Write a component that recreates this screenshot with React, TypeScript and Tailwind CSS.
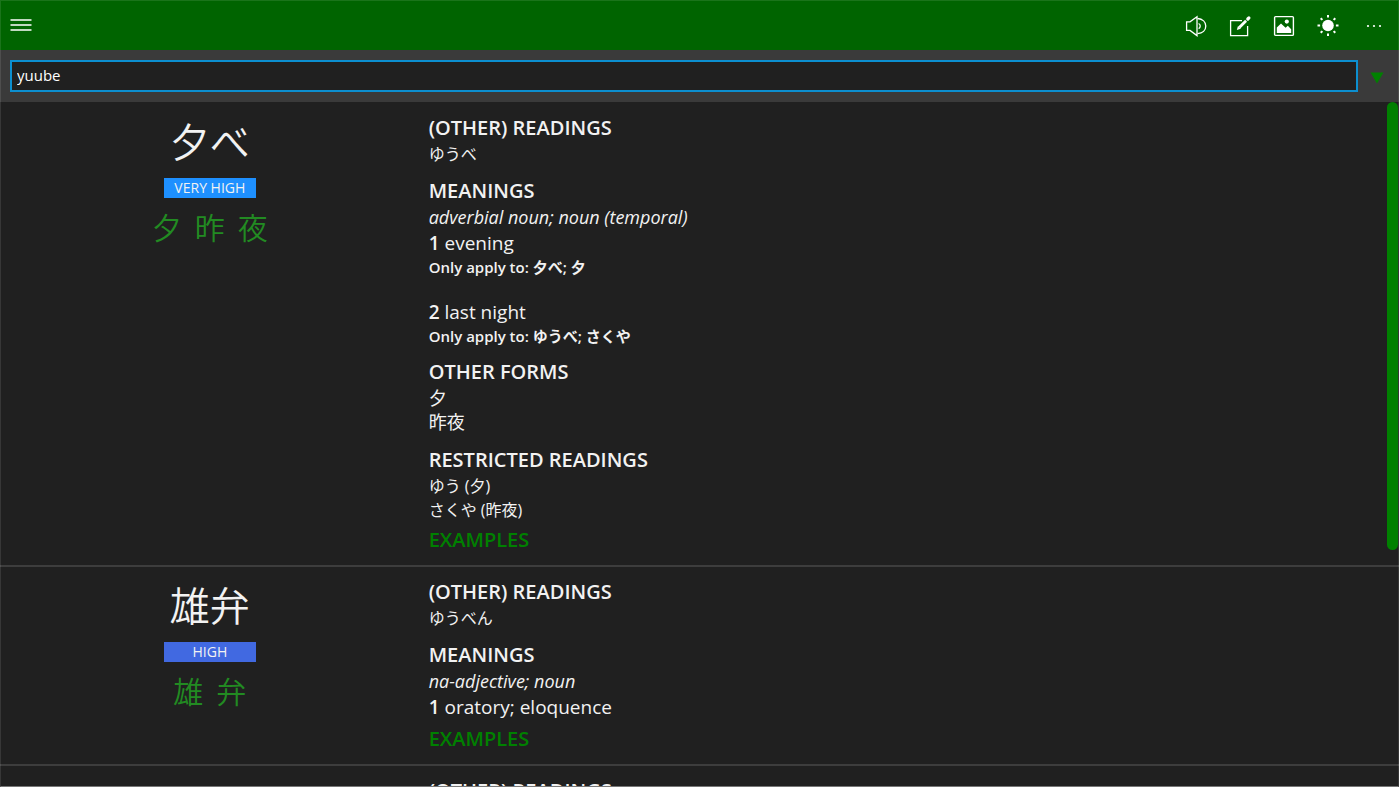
import { useState } from "react";

interface Sense {
  gloss: string;
  appliesTo?: string;
}

interface Entry {
  word: string;
  frequency: string;
  badge: string;
  kanji: string[];
  readings: string[];
  partOfSpeech: string;
  senses: Sense[];
  forms?: string[];
  restricted?: string[];
}

const entries: Entry[] = [
  {
    word: "夕べ",
    frequency: "VERY HIGH",
    badge: "bg-[#1e90ff]",
    kanji: ["夕", "昨", "夜"],
    readings: ["ゆうべ"],
    partOfSpeech: "adverbial noun; noun (temporal)",
    senses: [
      { gloss: "evening", appliesTo: "夕べ; 夕" },
      { gloss: "last night", appliesTo: "ゆうべ; さくや" },
    ],
    forms: ["夕", "昨夜"],
    restricted: ["ゆう (夕)", "さくや (昨夜)"],
  },
  {
    word: "雄弁",
    frequency: "HIGH",
    badge: "bg-[#4169e1]",
    kanji: ["雄", "弁"],
    readings: ["ゆうべん"],
    partOfSpeech: "na-adjective; noun",
    senses: [{ gloss: "oratory; eloquence" }],
  },
  {
    word: "",
    frequency: "",
    badge: "",
    kanji: [],
    readings: [],
    partOfSpeech: "",
    senses: [],
  },
];

function VolumeIcon() {
  return (
    <svg width="24" height="24" viewBox="0 0 24 24" fill="none" stroke="currentColor" strokeWidth="1.3">
      <path d="M2.6 7.8h3.4L13 2.8v18.8l-7-5.2H2.6z" />
      <path d="M14.6 9.5a2.9 2.9 0 0 1 0 5.2" />
      <path d="M13.6 4.5c5 .4 8.2 3.4 8.2 7.6s-3.2 7.2-8.2 7.6" />
    </svg>
  );
}

function EditIcon() {
  return (
    <svg width="24" height="24" viewBox="0 0 24 24" fill="none" stroke="currentColor">
      <path d="M14 6.7H2.6v15h17V12" strokeWidth="1.3" />
      <path d="M11.3 13.5l6.8-6.8" strokeWidth="2.8" />
      <path d="M8.8 16l1.2-4 2.8 2.8z" fill="currentColor" stroke="none" />
      <path d="M19.8 5l1.1-1.1" strokeWidth="3.2" strokeLinecap="round" />
    </svg>
  );
}

function PictureIcon() {
  return (
    <svg width="24" height="24" viewBox="0 0 24 24" fill="none">
      <rect x="2.6" y="2.6" width="18.8" height="18.8" rx="1" stroke="currentColor" strokeWidth="1.4" />
      <circle cx="14.8" cy="7.6" r="2.1" fill="currentColor" />
      <path d="M4.8 19v-5.6L9 9.4l4.6 4.4 2.2-2 3.4 3.4V19z" fill="currentColor" />
    </svg>
  );
}

function SunIcon() {
  return (
    <svg width="24" height="24" viewBox="0 0 24 24" stroke="currentColor" strokeWidth="2">
      <circle cx="12" cy="11.5" r="5.8" fill="currentColor" stroke="none" />
      <path d="M12 1v2.6M12 19.4V22M1.5 11.5h2.6M19.9 11.5h2.6M4.7 4.2l1.7 1.7M17.6 17.1l1.7 1.7M4.7 18.8l1.7-1.7M17.6 5.9l1.7-1.7" />
    </svg>
  );
}

function Toolbar() {
  const actions = [
    { label: "Sound", icon: <VolumeIcon /> },
    { label: "Draw", icon: <EditIcon /> },
    { label: "Picture", icon: <PictureIcon /> },
    { label: "Theme", icon: <SunIcon /> },
  ];

  return (
    <header className="flex h-[50px] shrink-0 items-center bg-[#006400] px-px text-white">
      <button aria-label="Menu" className="flex h-full w-10 items-center justify-center">
        <svg width="22" height="12" viewBox="0 0 22 12" stroke="currentColor" strokeWidth="1.4">
          <path d="M0.5 1h21M0.5 6h21M0.5 11h21" />
        </svg>
      </button>
      <div className="ml-auto flex h-full">
        {actions.map((a) => (
          <button key={a.label} aria-label={a.label} className="flex w-11 items-center justify-center pt-0.5">
            {a.icon}
          </button>
        ))}
        <button aria-label="More" className="flex w-12 items-center justify-center pt-0.5">
          <svg width="16" height="4" viewBox="0 0 16 4" fill="currentColor">
            <circle cx="2" cy="2" r="1.1" />
            <circle cx="8" cy="2" r="1.1" />
            <circle cx="14" cy="2" r="1.1" />
          </svg>
        </button>
      </div>
    </header>
  );
}

function SearchBar() {
  const [query, setQuery] = useState("yuube");

  return (
    <div className="flex h-[52px] shrink-0 items-center bg-[#3a3a3a] pl-[10px]">
      <input
        type="text"
        aria-label="Search"
        value={query}
        onChange={(e) => setQuery(e.target.value)}
        className="h-8 min-w-0 flex-1 border-2 border-[#0c8fd0] bg-[#202020] px-[5px] pb-0.5 text-[15px] text-white outline-none"
      />
      <button aria-label="Search options" className="flex h-full w-[41px] items-center justify-center pt-1 pr-1 text-[#008000]">
        <svg width="14" height="12" viewBox="0 0 14 12" fill="currentColor">
          <path d="M0.5 0.5h13L7 11.5z" />
        </svg>
      </button>
    </div>
  );
}

function Heading({ children }: { children: string }) {
  return <h2 className="text-[20px] leading-7 font-semibold">{children}</h2>;
}

function EntryRow({ entry }: { entry: Entry }) {
  return (
    <article className="flex border-b-2 border-[#3d3d3d] pt-[11px] pb-[11px]">
      <div className="flex w-[30%] shrink-0 flex-col items-center">
        <div className="text-[40px] leading-[56px] font-[350]">{entry.word}</div>
        {entry.frequency && (
          <div className={`mt-2 w-[92px] text-center text-[14px] leading-5 ${entry.badge}`}>
            {entry.frequency}
          </div>
        )}
        <div className="mt-[10px] flex gap-[13px] text-[30px] leading-10 font-[350] text-[#228b22]">
          {entry.kanji.map((k) => (
            <button key={k}>{k}</button>
          ))}
        </div>
      </div>
      <div className="min-w-0 flex-1 pl-[9px]">
        <section>
          <Heading>(OTHER) READINGS</Heading>
          {entry.readings.map((r) => (
            <p key={r} className="text-[16px] leading-6">{r}</p>
          ))}
        </section>
        <section className="mt-[11px]">
          <Heading>MEANINGS</Heading>
          <p className="text-[18px] leading-6 italic">{entry.partOfSpeech}</p>
          <ol className="flex flex-col gap-[21px]">
            {entry.senses.map((s, i) => (
              <li key={s.gloss}>
                <p className="text-[19px] leading-7">
                  <span className="font-semibold">{i + 1}</span> {s.gloss}
                </p>
                {s.appliesTo && (
                  <p className="text-[15px] leading-5 font-semibold">Only apply to: {s.appliesTo}</p>
                )}
              </li>
            ))}
          </ol>
        </section>
        {entry.forms && (
          <section className="mt-3">
            <Heading>OTHER FORMS</Heading>
            {entry.forms.map((f) => (
              <p key={f} className="text-[18px] leading-6">{f}</p>
            ))}
          </section>
        )}
        {entry.restricted && (
          <section className="mt-3">
            <Heading>RESTRICTED READINGS</Heading>
            {entry.restricted.map((r) => (
              <p key={r} className="text-[16px] leading-6">{r}</p>
            ))}
          </section>
        )}
        <button className="mt-1 block text-[20px] leading-7 font-semibold text-[#008000]">EXAMPLES</button>
      </div>
    </article>
  );
}

export default function App() {
  return (
    <div
      lang="ja"
      className="relative flex h-screen flex-col overflow-hidden bg-[#202020] font-['Open_Sans','Noto_Sans_CJK_JP',sans-serif] text-[#f2f2f2]"
    >
      <Toolbar />
      <SearchBar />
      <main className="relative min-h-0 flex-1 overflow-hidden pt-px">
        {entries.map((entry, i) => (
          <EntryRow key={i} entry={entry} />
        ))}
        <div className="absolute top-0 right-px h-[65.4%] w-[11px] rounded-full bg-[#008000]" />
      </main>
      <div className="pointer-events-none absolute inset-0 border border-white/10 border-b-[#777]" />
    </div>
  );
}
